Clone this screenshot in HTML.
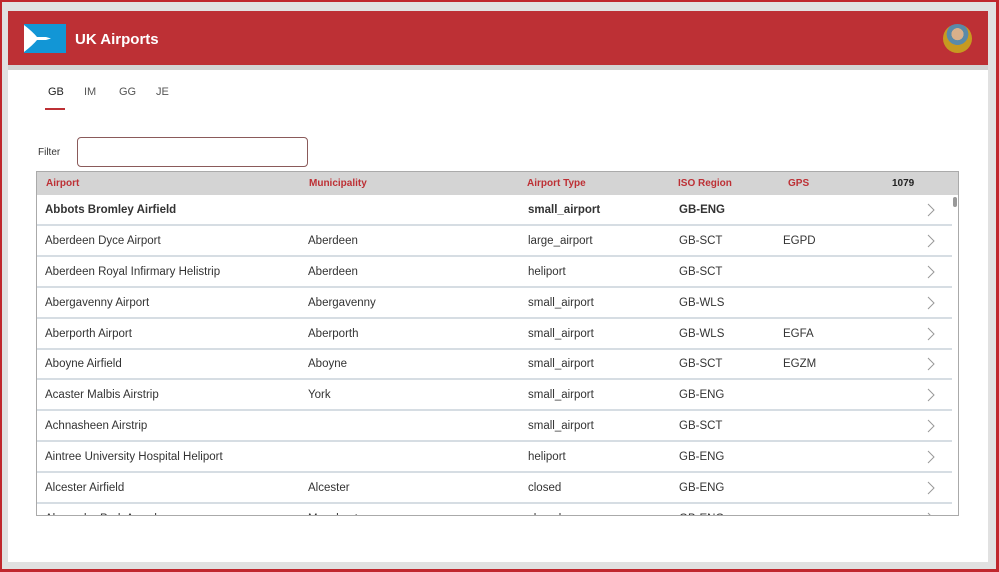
<!DOCTYPE html>
<html><head><style>
*{margin:0;padding:0;box-sizing:border-box}
body{width:999px;height:572px;background:#c0272d;font-family:"Liberation Sans",sans-serif;position:relative;overflow:hidden}
.frame{position:absolute;left:2px;top:2px;width:994px;height:567px;background:#e1e1e1}
.content{position:absolute;left:8px;top:70px;width:980px;height:492px;background:#fff}
.hdr{position:absolute;left:8px;top:11px;width:980px;height:54px;background:#bd3035}
.band{position:absolute;left:8px;top:65px;width:980px;height:5px;background:#d3d3d3}
.logo{position:absolute;left:24px;top:24px;width:42px;height:29px;background:#1296d6}
.title{position:absolute;left:75px;top:31px;color:#fff;font-size:15px;font-weight:bold}
.av{position:absolute;left:943px;top:24px;width:29px;height:29px;border-radius:50%;background:radial-gradient(circle at 50% 35%,#d9b08a 0 25%,#5a8aa8 26% 45%,#c79a20 46%)}
.tab{position:absolute;top:86px;font-size:11px;color:#555}
.ul{position:absolute;left:45px;top:108px;width:20px;height:2px;background:#bd3035}
.filt{position:absolute;left:38px;top:147px;font-size:10px;color:#333}
.inp{position:absolute;left:77px;top:137px;width:231px;height:30px;border:1px solid #8a5a5a;border-radius:4px;background:#fff}
.table{position:absolute;left:36px;top:171px;width:923px;height:345px;border:1px solid #aaa;overflow:hidden;background:#fff}
.th{position:absolute;left:0;top:0;width:923px;height:23px;background:#d4d4d4}
.th span{position:absolute;top:6px;font-size:10px;font-weight:bold;color:#bd3035}
.row{position:absolute;left:0;width:915px;height:31px;border-bottom:2px solid #d6dde3}
.row span{position:absolute;top:9px;font-size:11.5px;color:#333}
.row svg{position:absolute;left:890px;top:8px}
.sb{position:absolute;left:916px;top:25px;width:4px;height:10px;background:#999;border-radius:2px}
</style></head><body>
<div class="frame"></div>
<div class="content"></div>
<div class="hdr"></div>
<div class="band"></div>
<div class="logo"><svg width="42" height="29"><path d="M0 1 Q9 8 13 13 L22 13 L27 14.5 L22 16 L13 16 Q9 21 0 28Z" fill="#fff"/></svg></div>
<div class="title">UK Airports</div>
<div class="av"></div>
<div class="tab" style="left:48px;color:#222">GB</div>
<div class="tab" style="left:84px">IM</div>
<div class="tab" style="left:119px">GG</div>
<div class="tab" style="left:156px">JE</div>
<div class="ul"></div>
<div class="filt">Filter</div>
<div class="inp"></div>
<div class="table">
<div class="th"><span style="left:9px">Airport</span><span style="left:272px">Municipality</span><span style="left:490px">Airport Type</span><span style="left:641px">ISO Region</span><span style="left:751px">GPS</span><span style="left:855px;color:#222">1079</span></div>
<div class="sb"></div>
<div class="row" style="top:23px"><span style="left:8px;font-weight:bold">Abbots Bromley Airfield</span><span style="left:491px;font-weight:bold">small_airport</span><span style="left:642px;font-weight:bold">GB-ENG</span><svg width="8" height="14"><polyline points="1,1 7,7 1,13" fill="none" stroke="#999" stroke-width="1"/></svg></div>
<div class="row" style="top:54px"><span style="left:8px">Aberdeen Dyce Airport</span><span style="left:271px">Aberdeen</span><span style="left:491px">large_airport</span><span style="left:642px">GB-SCT</span><span style="left:746px">EGPD</span><svg width="8" height="14"><polyline points="1,1 7,7 1,13" fill="none" stroke="#999" stroke-width="1"/></svg></div>
<div class="row" style="top:85px"><span style="left:8px">Aberdeen Royal Infirmary Helistrip</span><span style="left:271px">Aberdeen</span><span style="left:491px">heliport</span><span style="left:642px">GB-SCT</span><svg width="8" height="14"><polyline points="1,1 7,7 1,13" fill="none" stroke="#999" stroke-width="1"/></svg></div>
<div class="row" style="top:116px"><span style="left:8px">Abergavenny Airport</span><span style="left:271px">Abergavenny</span><span style="left:491px">small_airport</span><span style="left:642px">GB-WLS</span><svg width="8" height="14"><polyline points="1,1 7,7 1,13" fill="none" stroke="#999" stroke-width="1"/></svg></div>
<div class="row" style="top:147px"><span style="left:8px">Aberporth Airport</span><span style="left:271px">Aberporth</span><span style="left:491px">small_airport</span><span style="left:642px">GB-WLS</span><span style="left:746px">EGFA</span><svg width="8" height="14"><polyline points="1,1 7,7 1,13" fill="none" stroke="#999" stroke-width="1"/></svg></div>
<div class="row" style="top:177px"><span style="left:8px">Aboyne Airfield</span><span style="left:271px">Aboyne</span><span style="left:491px">small_airport</span><span style="left:642px">GB-SCT</span><span style="left:746px">EGZM</span><svg width="8" height="14"><polyline points="1,1 7,7 1,13" fill="none" stroke="#999" stroke-width="1"/></svg></div>
<div class="row" style="top:208px"><span style="left:8px">Acaster Malbis Airstrip</span><span style="left:271px">York</span><span style="left:491px">small_airport</span><span style="left:642px">GB-ENG</span><svg width="8" height="14"><polyline points="1,1 7,7 1,13" fill="none" stroke="#999" stroke-width="1"/></svg></div>
<div class="row" style="top:239px"><span style="left:8px">Achnasheen Airstrip</span><span style="left:491px">small_airport</span><span style="left:642px">GB-SCT</span><svg width="8" height="14"><polyline points="1,1 7,7 1,13" fill="none" stroke="#999" stroke-width="1"/></svg></div>
<div class="row" style="top:270px"><span style="left:8px">Aintree University Hospital Heliport</span><span style="left:491px">heliport</span><span style="left:642px">GB-ENG</span><svg width="8" height="14"><polyline points="1,1 7,7 1,13" fill="none" stroke="#999" stroke-width="1"/></svg></div>
<div class="row" style="top:301px"><span style="left:8px">Alcester Airfield</span><span style="left:271px">Alcester</span><span style="left:491px">closed</span><span style="left:642px">GB-ENG</span><svg width="8" height="14"><polyline points="1,1 7,7 1,13" fill="none" stroke="#999" stroke-width="1"/></svg></div>
<div class="row" style="top:332px"><span style="left:8px">Alexandra Park Aerodrome</span><span style="left:271px">Manchester</span><span style="left:491px">closed</span><span style="left:642px">GB-ENG</span><svg width="8" height="14"><polyline points="1,1 7,7 1,13" fill="none" stroke="#999" stroke-width="1"/></svg></div>
</div>
</body></html>
